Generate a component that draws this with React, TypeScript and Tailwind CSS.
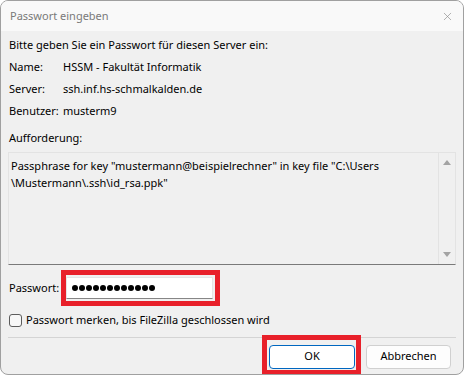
import { X } from 'lucide-react';

const font = { fontFamily: '"Noto Sans", "Open Sans", sans-serif' };

function InfoRow({ label, value }: { label: string; value: string }) {
  return (
    <div className="flex h-[22px] items-center">
      <span className="w-[54px]">{label}</span>
      <span>{value}</span>
    </div>
  );
}

export default function App() {
  const dots = Array.from({ length: 12 });
  return (
    <div
      className="flex h-[375px] w-[464px] flex-col overflow-hidden rounded-lg border border-[#a0a0a0] bg-[#f0f0f0] text-[11px] text-black"
      style={font}
    >
      {/* title bar */}
      <div className="flex h-[30px] shrink-0 items-center justify-between bg-[#f9f9f9] pl-[9px] pr-[9px]">
        <span className="text-[11px] text-[#7a7a7a]">Passwort eingeben</span>
        <X className="h-[13px] w-[13px] text-[#8a8a8a]" strokeWidth={1.2} />
      </div>

      <div className="flex flex-1 flex-col px-[7px]">
        <div className="mt-[3px] flex h-[22px] items-center pl-[1px]">
          Bitte geben Sie ein Passwort für diesen Server ein:
        </div>
        <div className="pl-[1px]">
          <InfoRow label="Name:" value="HSSM - Fakultät Informatik" />
          <InfoRow label="Server:" value="ssh.inf.hs-schmalkalden.de" />
          <InfoRow label="Benutzer:" value="musterm9" />
        </div>

        <div className="mt-[5px] flex h-[22px] items-center pl-[1px]">Aufforderung:</div>

        {/* read-only prompt box */}
        <div className="mt-[3px] flex h-[113px] border border-b-[#7a7a7a] border-l-[#e3e3e3] border-r-[#e3e3e3] border-t-[#e3e3e3]">
          <div className="flex-1 px-[2px] pt-[4px] leading-[17px]">
            Passphrase for key "mustermann@beispielrechner" in key file "C:\Users
            <br />
            \Mustermann\.ssh\id_rsa.ppk"
          </div>
          <div className="flex w-[17px] flex-col items-center justify-between border-l border-[#e3e3e3] py-[7px]">
            <svg width="8" height="5" viewBox="0 0 8 5">
              <path d="M4 0 L8 5 L0 5 Z" fill="#a3a3a3" />
            </svg>
            <svg width="8" height="5" viewBox="0 0 8 5">
              <path d="M0 0 L8 0 L4 5 Z" fill="#a3a3a3" />
            </svg>
          </div>
        </div>

        {/* password row */}
        <div className="mt-[12px] flex items-center pl-[1px]">
          <span className="w-[57px]">Passwort:</span>
          <div className="relative">
            <div className="flex h-[22px] w-[147px] items-center gap-[1px] border border-b-[#868686] border-l-[#e5e5e5] border-r-[#e5e5e5] border-t-[#e5e5e5] bg-white pl-[5px]">
              {dots.map((_, i) => (
                <span key={i} className="h-[6px] w-[6px] rounded-full bg-black" />
              ))}
            </div>
            <div className="pointer-events-none absolute -bottom-[7px] -left-[5px] -right-[7px] -top-[7px] border-[5px] border-[#e8202a]" />
          </div>
        </div>

        <label className="mt-[13px] flex items-center gap-[4px] pl-[1px]">
          <span className="h-[13px] w-[13px] rounded-[3px] border border-[#5c5c5c] bg-[#f7f7f7]" />
          <span>Passwort merken, bis FileZilla geschlossen wird</span>
        </label>

        <div className="mt-[8px] h-px bg-[#d4d4d4]" />

        <div className="mt-[7px] flex justify-end gap-[11px] pr-[5px]">
          <div className="relative">
            <button className="flex h-[24px] w-[86px] items-center justify-center rounded-[4px] border border-[#0067c0] bg-white">
              OK
            </button>
            <div className="pointer-events-none absolute -bottom-[6px] -left-[7px] -right-[6px] -top-[10px] border-[5px] border-[#e8202a]" />
          </div>
          <button className="flex h-[24px] w-[85px] items-center justify-center rounded-[4px] border border-[#d0d0d0] bg-[#fdfdfd]">
            Abbrechen
          </button>
        </div>
      </div>
    </div>
  );
}
